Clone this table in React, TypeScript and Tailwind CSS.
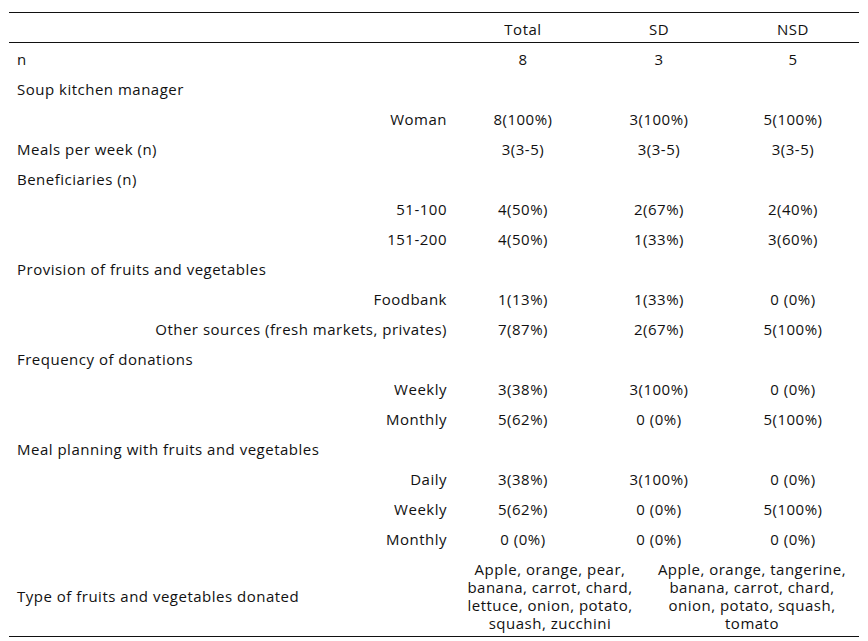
import React from "react";

type Row = {
  label: string;
  indent?: boolean;
  values?: [string, string, string];
};

const rows: Row[] = [
  { label: "n", values: ["8", "3", "5"] },
  { label: "Soup kitchen manager" },
  { label: "Woman", indent: true, values: ["8(100%)", "3(100%)", "5(100%)"] },
  { label: "Meals per week (n)", values: ["3(3-5)", "3(3-5)", "3(3-5)"] },
  { label: "Beneficiaries (n)" },
  { label: "51-100", indent: true, values: ["4(50%)", "2(67%)", "2(40%)"] },
  { label: "151-200", indent: true, values: ["4(50%)", "1(33%)", "3(60%)"] },
  { label: "Provision of fruits and vegetables" },
  { label: "Foodbank", indent: true, values: ["1(13%)", "1(33%)", "0 (0%)"] },
  {
    label: "Other sources (fresh markets, privates)",
    indent: true,
    values: ["7(87%)", "2(67%)", "5(100%)"],
  },
  { label: "Frequency of donations" },
  { label: "Weekly", indent: true, values: ["3(38%)", "3(100%)", "0 (0%)"] },
  { label: "Monthly", indent: true, values: ["5(62%)", "0 (0%)", "5(100%)"] },
  { label: "Meal planning with fruits and vegetables" },
  { label: "Daily", indent: true, values: ["3(38%)", "3(100%)", "0 (0%)"] },
  { label: "Weekly", indent: true, values: ["5(62%)", "0 (0%)", "5(100%)"] },
  { label: "Monthly", indent: true, values: ["0 (0%)", "0 (0%)", "0 (0%)"] },
];

const cols = "grid grid-cols-[446px_136px_136px_132px]";

export default function App() {
  return (
    <div className="w-[868px] h-[641px] bg-white pt-[12px] pl-[9px] font-['Open_Sans',sans-serif] text-[15px] tracking-[0.5px] text-[#111]">
      <div className="w-[850px] border-t border-b border-[#111]">
        {/* header */}
        <div className={`${cols} h-[30px] items-center pt-[3px] border-b border-[#111]`}>
          <div />
          <div className="text-center">Total</div>
          <div className="text-center">SD</div>
          <div className="text-center">NSD</div>
        </div>

        {rows.map((r, i) => (
          <div key={i} className={`${cols} h-[30px] items-center pt-[3px]`}>
            <div className={r.indent ? "text-right pr-[8px]" : "pl-[8px]"}>{r.label}</div>
            {r.values?.map((v, j) => (
              <div key={j} className="text-center">
                {v}
              </div>
            ))}
          </div>
        ))}

        {/* last row */}
        <div className="grid grid-cols-[446px_190px_214px] h-[83px] items-center pt-[4px] pb-[1px]">
          <div className="pl-[8px]">Type of fruits and vegetables donated</div>
          <div className="text-center leading-[18px]">
            Apple, orange, pear,
            <br />
            banana, carrot, chard,
            <br />
            lettuce, onion, potato,
            <br />
            squash, zucchini
          </div>
          <div className="text-center leading-[18px]">
            Apple, orange, tangerine,
            <br />
            banana, carrot, chard,
            <br />
            onion, potato, squash,
            <br />
            tomato
          </div>
        </div>
      </div>
    </div>
  );
}
